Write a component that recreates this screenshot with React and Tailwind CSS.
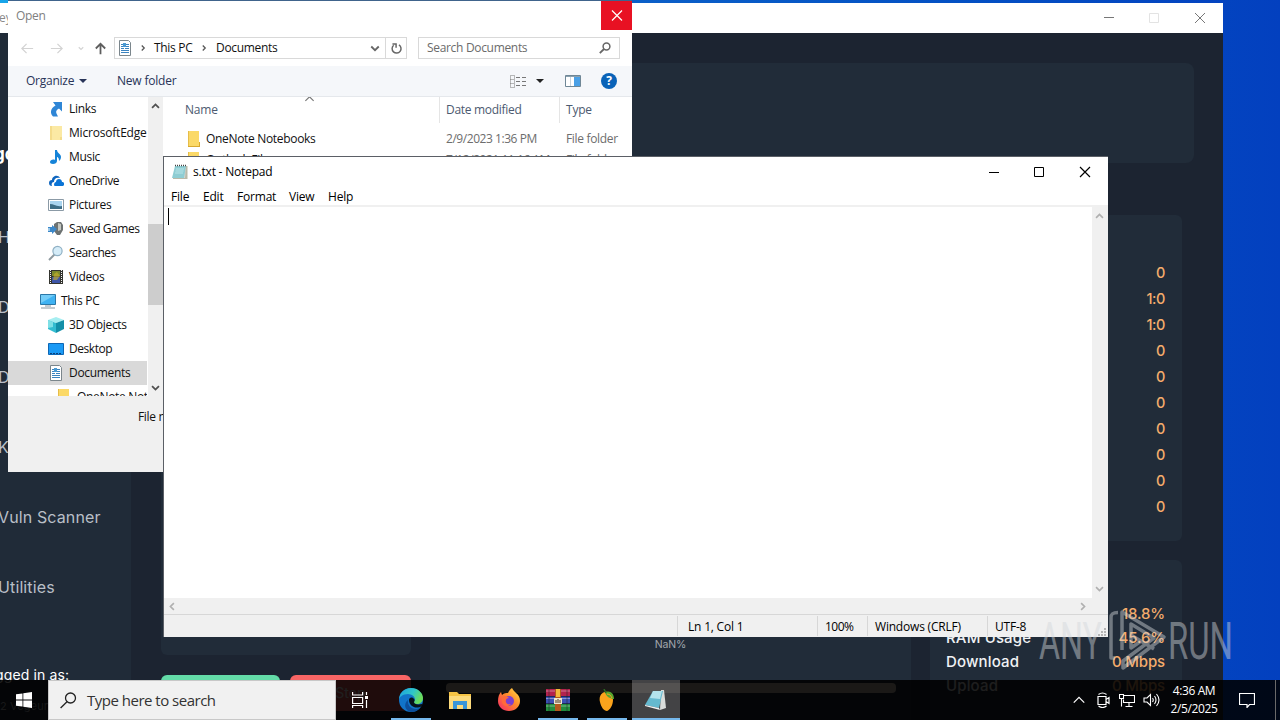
import clsx from 'clsx';

const ui = "font-['Open_Sans','Noto_Sans',sans-serif]";
const poppins = "font-['Inter','Open_Sans',sans-serif]";

const navItems = ['Home', 'Dashboard', 'Dorks', 'Keygen', 'Vuln Scanner', 'Utilities'];
const stats = ['0', '1:0', '1:0', '0', '0', '0', '0', '0', '0', '0'];
const usage = [
  ['CPU Usage', '18.8%'],
  ['RAM Usage', '45.6%'],
  ['Download', '0 Mbps'],
  ['Upload', '0 Mbps'],
];

const tree = [
  { label: 'Links', icon: 'links' },
  { label: 'MicrosoftEdge', icon: 'paleFolder', text: 'tracking-[-0.2px]' },
  { label: 'Music', icon: 'music' },
  { label: 'OneDrive', icon: 'onedrive' },
  { label: 'Pictures', icon: 'pictures' },
  { label: 'Saved Games', icon: 'games', text: 'tracking-[-0.45px]' },
  { label: 'Searches', icon: 'searches', text: 'tracking-[-0.45px]' },
  { label: 'Videos', icon: 'videos' },
  { label: 'This PC', icon: 'pc', pad: 'pl-8' },
  { label: '3D Objects', icon: 'cube' },
  { label: 'Desktop', icon: 'desktop', text: 'tracking-[-0.45px]' },
  { label: 'Documents', icon: 'doc', selected: true },
  { label: 'OneNote Notebooks', icon: 'folder', pad: 'pl-12' },
];

const files = [
  { name: 'OneNote Notebooks', date: '2/9/2023 1:36 PM' },
  { name: 'Outlook Files', date: '7/12/2021 11:16 AM' },
];

const icons = {
  links: (
    <path d="M5 1h9v9.500l-3-3c-2.500 1-3.500 3-2.500 5l1.500 3H5c-3-3-3-8 2.500-11z" fill="#2f86d6" />
  ),
  paleFolder: (
    <>
      <path d="M2 1h12v14H2z" fill="#fbe9a4" />
      <path d="M2 1h2v14H2zM12 12h2v3h-2z" fill="#f4dc8c" />
    </>
  ),
  folder: (
    <>
      <path d="M2 0h11v11h1v5H2z" fill="#fbd967" />
      <path d="M2 15h12v1H2zM13 11h1v4h-1z" fill="#d8a92f" />
      <path d="M2 0h1v15H2z" fill="#e6bd4a" />
    </>
  ),
  music: (
    <path d="M7 1h2c0 3 4 4 4 7 0 2-1 3-2 4 0-3-1-4-2-4v4c0 2-2 3-4 3s-3-1-3-2c0-2 3-3 5-2z" fill="#1583d8" />
  ),
  onedrive: (
    <>
      <path d="M1 10c0-2 1-3 3-3 0-4 6-6 8-2-4-1-6 1-6 4-2 0-3 2-2 4-2 0-3-1-3-3z" fill="#0f66bf" />
      <path d="M6 12c0-2 1-3 2-3 0-4 6-4 6 0 3 0 3 4 0 4H7c-1 0-1-1-1-1z" fill="#0a74d6" />
    </>
  ),
  pictures: (
    <>
      <path d="M.5 2.500h15v11H.5z" fill="#fff" stroke="#8b9aa6" />
      <path d="M2 4h12v8H2z" fill="#a9d4ef" />
      <path d="M2 7c4 0 6 3 12 2v3H2z" fill="#3d6d86" />
    </>
  ),
  games: (
    <>
      <path d="M6 3l3-2h4l2 3v5l-3 5H9l-3-4z" fill="#6d7272" />
      <path d="M10 2l3 1v6l-3 1z" fill="#c3c6c0" />
      <path d="M0 6h4V4l5 4-5 5v-2H0z" fill="#3b87c8" />
      <path d="M0 7h2v3H0z" fill="#9cc9ea" />
    </>
  ),
  searches: (
    <>
      <path d="M7 9l-6 6" stroke="#8f9aa0" strokeWidth="2" />
      <circle cx="9.500" cy="6" r="4.600" fill="#d5ecf8" stroke="#8fb0c4" strokeWidth="1.200" />
    </>
  ),
  videos: (
    <>
      <path d="M1 1h14v14H1z" fill="#34352f" />
      <path d="M4 2h8v5H4z" fill="#7c8a2c" />
      <path d="M4 8h8v6H4z" fill="#3d55a8" />
      <path d="M6 5l3-2 3 4-3 4H5z" fill="#cfb42a" opacity=".6" />
      <path d="M2.500 1v14M13.500 1v14" stroke="#f2f2f2" strokeDasharray="1 1" />
    </>
  ),
  pc: (
    <>
      <path d="M.5 1.500h15v10H.5z" fill="#3fb2f2" stroke="#2b78a8" />
      <path d="M1 2h14L1 10z" fill="#74cdf8" />
      <path d="M5 13h6M1 15h14" stroke="#8a98a2" />
    </>
  ),
  cube: (
    <>
      <path d="M8 0l8 3-8 3-8-3z" fill="#a6eef1" />
      <path d="M0 3l8 3v10l-8-4z" fill="#33bcd0" />
      <path d="M16 3L8 6v10l8-4z" fill="#138fa8" />
      <path d="M0 3l5 2v5l-5 1z" fill="#7fe0e6" />
    </>
  ),
  desktop: (
    <>
      <path d="M.5 2.500h15v11H.5z" fill="#1a9af5" stroke="#0d67b5" />
      <path d="M2 12.500h12" stroke="#0b3f78" strokeDasharray="2 1" />
    </>
  ),
  doc: (
    <>
      <path d="M2.500.5h9l2 2v13h-11z" fill="#fff" stroke="#7b868c" />
      <path d="M4 4.500h4M9 4.500h3M4 6.500h8M4 8.500h3M8 8.500h4M4 10.500h8M4 12.500h8" stroke="#3a83bf" />
      <path d="M6 3h3v4H6z" fill="#4c9bd3" />
    </>
  ),
};

function Icon({ name, className = 'size-4' }) {
  return (
    <svg viewBox="0 0 16 16" fill="none" className={clsx('shrink-0', className)}>
      {icons[name]}
    </svg>
  );
}

function Stroke({ d, className, width = 1, box = '0 0 16 16' }) {
  return (
    <svg viewBox={box} fill="none" stroke="currentColor" strokeWidth={width} className={clsx('shrink-0', className)}>
      <path d={d} />
    </svg>
  );
}

function ToolWindow() {
  return (
    <div className={clsx('absolute left-0 top-[3px] w-[1223px] h-[717px] flex flex-col bg-[#1c2431] overflow-hidden', poppins)}>
      <div className={clsx('h-[30px] shrink-0 bg-white flex items-center justify-between text-xs text-[#8a8a8a]', ui)}>
        <span className="-ml-px">ey</span>
        <div className="flex items-center">
          <Stroke d="M3 7.500h10" className="size-4 mr-[29px] text-[#777]" />
          <Stroke d="M3.500 3.500h9v9h-9z" className="size-4 mr-[30px] text-[#e3e3e3]" />
          <Stroke d="M3 3l10 10M13 3L3 13" className="size-4 mr-[15px] text-[#777]" />
        </div>
      </div>
      <div className="flex flex-1 min-h-0">
        <aside className="w-[131px] shrink-0 bg-[#202b38] flex flex-col text-[#b9bfc7] text-base tracking-[0.12px] whitespace-nowrap">
          <div className="h-[169px] shrink-0 pt-[109px] text-[17px] font-bold text-white leading-6">
            <span className="-ml-[6px]">go</span>
          </div>
          {navItems.map((item) => (
            <div key={item} className="h-[70px] shrink-0 flex items-center">
              <span className="-ml-[2px]">{item}</span>
            </div>
          ))}
          <div className="mt-[43px] text-[14px] leading-5 text-white">
            <span className="-ml-[5px]">gged in as:</span>
          </div>
          <div className="mt-[13px] text-[11px] leading-4">
            <span>2 Vegeuni</span>
          </div>
        </aside>
        <main className="flex-1 p-[30px] flex flex-col">
          <div className="h-[100px] w-[1033px] shrink-0 rounded-lg bg-[#212c39]" />
          <div className="mt-[52px] flex items-start gap-[19px]">
            <div className="w-[250px]">
              <div className="h-[440px] rounded-md bg-[#212c39]" />
              <div className="mt-5 flex gap-[10px] text-sm text-white">
                <div className="w-[119px] h-9 rounded-md bg-[#63dba8] flex items-center justify-center">Start</div>
                <div className="flex-1 h-9 rounded-md bg-[#f86565] flex items-center justify-center">Stop</div>
              </div>
            </div>
            <div className="w-[481px] h-[510px] rounded-md bg-[#212c39] flex flex-col items-center pt-[422px]">
              <span className="text-[10.500px] leading-4 tracking-[-0.1px] text-[#a3a8ae]">NaN%</span>
              <div className="mt-[30px] w-[450px] h-[10px] rounded bg-[#d8cdbd]" />
            </div>
            <div className="w-[252px] flex flex-col gap-[19px]">
              <div className="h-[326px] rounded-md bg-[#212c39] pt-[45px] pr-[17px] text-right text-[14.500px] leading-[26px] tracking-[-0.4px] font-medium text-[#f5ac6c]">
                {stats.map((s, i) => (
                  <div key={i}>{s}</div>
                ))}
              </div>
              <div className="h-[170px] rounded-md bg-[#212c39] pt-[42px] pl-4 pr-[17px] text-[15px] leading-6">
                {usage.map(([label, value]) => (
                  <div key={label} className="flex justify-between">
                    <span className="font-medium tracking-[0.15px] text-[#f0f2f4]">{label}</span>
                    <span className="tracking-[-0.15px] font-medium text-[#f5ac6c]">{value}</span>
                  </div>
                ))}
              </div>
            </div>
          </div>
        </main>
      </div>
    </div>
  );
}

function AddressBar() {
  return (
    <div className="h-9 shrink-0 flex items-center pl-3 pr-3">
      <Stroke d="M14 8H2M7 3L2 8l5 5" className="size-[15px] text-[#d3d3d3]" width={1.3} />
      <Stroke d="M2 8h12M9 3l5 5-5 5" className="size-[15px] ml-[14px] text-[#d3d3d3]" width={1.3} />
      <Stroke d="M5 7l3 3 3-3" className="size-3 ml-[11px] text-[#d3d3d3]" width={1.5} />
      <Stroke d="M8 14V3M3 8l5-5 5 5" className="size-[15px] ml-[6px] text-[#5e5e5e]" width={1.9} />
      <div className="ml-[6px] h-[22px] w-[293px] border border-[#d9d9d9] flex items-center">
        <Icon name="doc" className="size-4 ml-[2px]" />
        <Stroke d="M6 4l4 4-4 4" className="size-[10px] ml-[5px] text-[#555]" width={2} />
        <span className="ml-[6px] w-10">This PC</span>
        <Stroke d="M6 4l4 4-4 4" className="size-[10px] ml-[5px] text-[#555]" width={2} />
        <span className="ml-[7px]">Documents</span>
        <Stroke d="M3 6l5 5 5-5" className="size-3 ml-auto mr-1 text-[#666]" width={2.4} />
        <div className="w-[21px] h-full border-l border-[#d9d9d9] flex items-center justify-center">
          <Stroke d="M11 3.500a5.500 5.500 0 1 1-6.500.5M3 2.500h4.500V7" className="size-[13px] text-[#666]" width={1.8} />
        </div>
      </div>
      <div className="ml-[11px] h-[22px] flex-1 border border-[#d9d9d9] flex items-center justify-between pl-2 pr-2 text-[#6b6b6b]">
        <span>Search Documents</span>
        <svg viewBox="0 0 12 12" fill="none" stroke="#666" className="size-3">
          <circle cx="7.500" cy="4.500" r="3.400" strokeWidth="1.500" />
          <path d="M5 7L.8 11.200" strokeWidth="1.800" />
        </svg>
      </div>
    </div>
  );
}

function CommandBar() {
  return (
    <div className="h-[31px] shrink-0 bg-[#f5f7fa] border-b border-[#e5e8ec] flex items-center pl-[18px] pr-[15px] text-[#283458]">
      <span className="w-[49px] tracking-[-0.25px]">Organize</span>
      <svg viewBox="0 0 8 4" className="w-2 h-1 ml-[4px]" fill="#283458"><path d="M0 0h8L4 4z" /></svg>
      <span className="ml-[30px] tracking-[-0.2px]">New folder</span>
      <svg viewBox="0 0 17 13" className="w-[17px] h-[13px] ml-auto" stroke="#777" fill="none">
        <path d="M.5.5h4v12h-4zM.5 4.500h4M.5 8.500h4" strokeDasharray="1 1" />
        <path d="M6 2.500h4M12 2.500h4M6 6.500h4M12 6.500h4M6 10.500h4M12 10.500h4" />
      </svg>
      <svg viewBox="0 0 8 4" className="w-2 h-1 ml-[9px]" fill="#222"><path d="M0 0h8L4 4z" /></svg>
      <svg viewBox="0 0 16 12" className="w-4 h-3 ml-[21px]">
        <path d="M.5.5h15v11H.5z" fill="#fff" stroke="#6f8796" />
        <path d="M9 1h6v10H9z" fill="#4aa0e6" />
        <path d="M5.500 1v10" stroke="#c9d4dc" />
        <path d="M1 1.500h14" stroke="#8aa0ae" />
      </svg>
      <div className="ml-5 size-4 rounded-full bg-[#0a63b8] text-white text-xs leading-4 font-bold text-center">?</div>
    </div>
  );
}

function OpenDialog() {
  return (
    <div className={clsx('absolute left-2 top-0 w-[624px] h-[472px] bg-white border-t border-[#40648c] flex flex-col text-xs text-[#111] tracking-[-0.32px] whitespace-nowrap', ui)}>
      <div className="h-[29px] shrink-0 flex justify-between items-center pl-2 text-[#808080]">
        <span>Open</span>
        <div className="w-[31px] h-[29px] bg-[#e81123] flex items-center justify-center text-white">
          <Stroke d="M3 2.500l10 10M13 2.500L3 12.500" className="size-4" width={1.2} />
        </div>
      </div>
      <AddressBar />
      <CommandBar />
      <div className="h-[299px] shrink-0 flex">
        <div className="w-[139px] overflow-hidden">
          {tree.map((t) => (
            <div
              key={t.label}
              className={clsx('h-6 flex items-center gap-[5px]', t.pad || 'pl-10', t.selected && 'bg-[#d9d9d9]')}
            >
              <Icon name={t.icon} />
              <span className={t.text}>{t.label}</span>
            </div>
          ))}
        </div>
        <div className="ml-px w-[15px] bg-[#f0f0f0] flex flex-col items-center">
          <Stroke d="M3 10l5-5 5 5" className="size-[11px] mt-1 text-[#505050]" width={2.6} />
          <div className="mt-[112px] h-[81px] w-full bg-[#cdcdcd]" />
          <Stroke d="M3 6l5 5 5-5" className="size-[11px] mt-auto mb-[3px] text-[#505050]" width={2.6} />
        </div>
        <div className="flex-1 overflow-hidden pl-px">
          <div className="relative h-[26px] flex items-center text-[#4c5a70] tracking-[-0.2px]">
            <Stroke d="M2 10l6-6 6 6" className="absolute left-[140px] top-[-3px] size-[11px] text-[#777]" width={1.6} />
            <span className="w-[275px] pl-[21px]">Name</span>
            <span className="w-[120px] h-full border-l border-[#e5e5e5] pl-[6px] leading-[26px] tracking-[-0.3px]">Date modified</span>
            <span className="h-full border-l border-[#e5e5e5] pl-[6px] leading-[26px]">Type</span>
          </div>
          <div className="pt-[5px]">
            {files.map((f) => (
              <div key={f.name} className="h-[21px] flex items-center">
                <Icon name="folder" className="size-4 ml-[22px]" />
                <span className="ml-1 w-[240px]">{f.name}</span>
                <span className="w-[120px] text-[#6d6d6d] tracking-[-0.45px]">{f.date}</span>
                <span className="text-[#6d6d6d]">File folder</span>
              </div>
            ))}
          </div>
        </div>
      </div>
      <div className="flex-1 bg-[#f0f0f0] pl-[130px] pt-[13px]">File name:</div>
    </div>
  );
}

function Notepad() {
  return (
    <div className={clsx('absolute left-[163px] top-[156px] w-[945px] h-[481px] bg-white border-l border-t border-[#5b5f66] flex flex-col text-xs text-black tracking-[-0.2px] whitespace-nowrap', ui)}>
      <div className="h-[29px] shrink-0 flex items-center pl-2">
        <svg viewBox="0 0 16 16" className="size-4">
          <path d="M4 2h11l-2 13H1z" fill="#d3d6d2" />
          <path d="M3 2h11l-2 12H0z" fill="#8ecdd3" />
          <path d="M14 2h1.500v13H1v-1h12z" fill="#b9b9a8" />
          <path d="M4 5h8M3.500 7h8M3 9h8" stroke="#b9e4e8" />
          <path d="M3 1.500h11" stroke="#444" strokeWidth="1.500" strokeDasharray="1 1" />
        </svg>
        <span className="ml-[5px] pt-px">s.txt - Notepad</span>
        <div className="ml-auto flex pr-[15px]">
          <Stroke d="M3 8.500h10" className="size-4 mr-[29px]" />
          <Stroke d="M3.500 3.500h9v9h-9z" className="size-4 mr-[30px]" />
          <Stroke d="M3 3l10 10M13 3L3 13" className="size-4" width={1.2} />
        </div>
      </div>
      <div className="h-[21px] shrink-0 flex items-center pl-[7px] pt-[2px] border-b-2 border-[#f0f0f0]">
        <span className="w-8">File</span>
        <span className="w-[34px]">Edit</span>
        <span className="w-[52px]">Format</span>
        <span className="w-[39px]">View</span>
        <span>Help</span>
      </div>
      <div className="flex h-[391px] shrink-0">
        <div className="flex-1 pl-1 pt-[1px]">
          <div className="w-px h-[17px] bg-black" />
        </div>
        <div className="w-4 bg-[#f0f0f0] flex flex-col items-center justify-between py-1 pr-px text-[#b0b0b0]">
          <Stroke d="M3 10l5-5 5 5" className="size-[11px]" width={2.4} />
          <Stroke d="M3 6l5 5 5-5" className="size-[11px]" width={2.4} />
        </div>
      </div>
      <div className="h-4 shrink-0 bg-[#f0f0f0] flex items-center justify-between pl-[3px] pr-5 text-[#b0b0b0]">
        <Stroke d="M10 3L5 8l5 5" className="size-[11px]" width={2.4} />
        <Stroke d="M6 3l5 5-5 5" className="size-[11px]" width={2.4} />
      </div>
      <div className="flex-1 bg-[#f0f0f0] border-t border-[#d7d7d7] flex items-center">
        <div className="ml-[513px] w-[140px] h-5 border-l border-[#d7d7d7] pl-[10px] leading-[21px]">Ln 1, Col 1</div>
        <div className="w-[50px] h-5 border-l border-[#d7d7d7] pl-[7px] leading-[21px] tracking-[-0.5px]">100%</div>
        <div className="w-[120px] h-5 border-l border-[#d7d7d7] pl-[7px] leading-[21px]">Windows (CRLF)</div>
        <div className="h-5 border-l border-[#d7d7d7] pl-[7px] leading-[21px]">UTF-8</div>
        <svg viewBox="0 0 10 10" className="size-[10px] ml-auto mt-auto mr-px" fill="#b5b5b5">
          <path d="M7 1h2v2H7zM4 4h2v2H4zM7 4h2v2H7zM1 7h2v2H1zM4 7h2v2H4zM7 7h2v2H7z" />
        </svg>
      </div>
    </div>
  );
}

function Watermark() {
  return (
    <svg
      viewBox="0 0 200 70"
      className="absolute left-[1035px] top-[605px] w-[200px] h-[70px] opacity-45 font-['Roboto',sans-serif]"
      fill="#d3d6da"
    >
      <g transform="translate(4 54) scale(1 1.450)" fontSize="36">
        <text textLength="63" lengthAdjust="spacingAndGlyphs">ANY</text>
      </g>
      <g transform="translate(133 54) scale(1 1.450)" fontSize="36">
        <text textLength="65" lengthAdjust="spacingAndGlyphs">RUN</text>
      </g>
      <g fill="none" stroke="#d3d6da" strokeWidth="3.500" strokeLinejoin="round">
        <path d="M83 7.500c-5 0-7 1-7 5V53h4" />
        <path d="M87 45V7l42 25-41 31v-7l31-23-23-14v24l10-7" />
        <path d="M96 30l23 14" />
      </g>
    </svg>
  );
}

function TaskButton({ children, running, active }) {
  return (
    <div className={clsx('w-12 h-10 relative flex items-center justify-center', active && 'bg-white/25')}>
      {children}
      {running && (
        <div className={clsx('absolute bottom-0 h-[2px] bg-[#76b9ed]', active ? 'inset-x-0' : 'inset-x-1')} />
      )}
    </div>
  );
}

function Taskbar() {
  return (
    <div className={clsx('absolute left-0 bottom-0 w-full h-10 bg-black/88 flex items-center text-white', ui)}>
      <div className="w-12 flex justify-center">
        <svg viewBox="0 0 16 16" className="size-4" fill="#fff">
          <path d="M0 2.300L6.500 1.400v6.200H0zM7.300 1.300L16 0v7.600H7.300zM0 8.400h6.500v6.200L0 13.700zM7.300 8.400H16V16l-8.700-1.300z" />
        </svg>
      </div>
      <div className="w-72 h-10 bg-[#f1f1f1] border border-[#c8c8c8] flex items-center pl-[11px] text-[#333]">
        <svg viewBox="0 0 17 17" className="size-[17px]" fill="none" stroke="#222" strokeWidth="1.300">
          <circle cx="10.500" cy="6" r="5" />
          <path d="M7 9.800L.6 16" />
        </svg>
        <span className="ml-[10px] text-[15px] tracking-[-0.5px]">Type here to search</span>
      </div>
      <div className="w-[51px] pl-4">
        <svg viewBox="0 0 16 16" className="size-4" fill="none" stroke="#fff" strokeWidth="1.200">
          <path d="M.6 0v3h10V0M.6 5.500h10v6H.6zM.6 16v-2.500h10V16M14.500 0v3M14.500 8v8" />
          <path d="M13 4h3v3h-3z" fill="#fff" stroke="none" />
        </svg>
      </div>
      <div className="flex gap-px">
        <TaskButton running>
          <svg viewBox="0 0 24 24" className="size-6">
            <defs>
              <linearGradient id="edgeTop" x1="0" y1="0" x2="1" y2=".4">
                <stop offset="0" stopColor="#1c9fe0" />
                <stop offset=".6" stopColor="#2fc6c9" />
                <stop offset="1" stopColor="#6bdc5a" />
              </linearGradient>
            </defs>
            <circle cx="12" cy="12" r="12" fill="#1174c9" />
            <path d="M0 12C0 5 5 0 12 0s12 5 12 10c0 4-3 6-6 6-3 0-4-1-4-2s2-1 2-3c0-2-3-5-7-5-5 0-9 3-9 6z" fill="url(#edgeTop)" />
            <path d="M9 12c-1 5 3 9 8 9 2 0 4-1 5-2-2 3-6 5-10 5-6-1-8-8-3-12z" fill="#0c4f9c" />
            <path d="M10 12c0-2 2-3 4-2s2 3 1 4c0 2 3 3 8 2v2c-6 4-13 0-13-6z" fill="#07121c" />
          </svg>
        </TaskButton>
        <TaskButton>
          <svg viewBox="0 0 22 19" className="w-[22px] h-[19px]">
            <path d="M0 1h8l2 2h12v15H0z" fill="#f6c445" />
            <path d="M0 5h22v13H0z" fill="#fddb7c" />
            <path d="M4 10h14v8h-4v-4H8v4H4z" fill="#3a96d8" />
          </svg>
        </TaskButton>
        <TaskButton>
          <svg viewBox="0 0 24 24" className="size-6">
            <defs>
              <linearGradient id="fox" x1="1" y1="0" x2="0" y2="1">
                <stop offset="0" stopColor="#ffe14a" />
                <stop offset=".45" stopColor="#ff8a2a" />
                <stop offset="1" stopColor="#f5246c" />
              </linearGradient>
            </defs>
            <path d="M15 0c1 2 3 4 4 5 3 2 4 5 4 8 0 6-5 10-11 10S1 19 1 13c0-4 1-7 3-9l1 3c2-2 4-2 6-2 1-2 2-4 4-5z" fill="url(#fox)" />
            <circle cx="12" cy="13" r="5" fill="#7b3fd0" />
            <path d="M5 9c3-2 5-1 7 1-2 0-3 1-3 2-1 3 2 5 5 4-3 4-9 2-9-3z" fill="#ff6a3a" />
          </svg>
        </TaskButton>
        <TaskButton running>
          <svg viewBox="0 0 24 22" className="w-6 h-[22px]">
            <path d="M0 0h24v7H0z" fill="#b3234e" />
            <path d="M0 7.500h24v7H0z" fill="#3b50b4" />
            <path d="M0 15h24v7H0z" fill="#218c3d" />
            <path d="M0 2h24M0 9.500h24M0 17h24" stroke="#fff" strokeOpacity=".4" />
            <path d="M3 0v22M21 0v22" stroke="#222" strokeOpacity=".5" />
            <path d="M9 0h6v22H9z" fill="#b2591d" />
            <path d="M10 0h4v8h-4z" fill="#f2b93d" />
            <path d="M8 9h8v6H8z" fill="#eee5cd" />
            <path d="M10 11v3M12 10v4M14 11v3" stroke="#4a3820" />
          </svg>
        </TaskButton>
        <TaskButton running>
          <svg viewBox="0 0 16 22" className="w-4 h-[22px]">
            <path d="M6 3C1 4 0 9 1 13c1 5 4 9 7 9 3-1 6-6 6-11 0-5-3-9-8-8z" fill="#fba31c" />
            <path d="M6 3c5-2 9 1 9 7-3 0-8-2-9-7z" fill="#55a630" />
            <path d="M8 5c3 0 4 2 5 4" stroke="#fba31c" fill="none" />
            <path d="M5 0l2 4" stroke="#2d6b25" strokeWidth="1.500" />
          </svg>
        </TaskButton>
        <TaskButton running active>
          <svg viewBox="0 0 22 22" className="size-[22px]">
            <path d="M16 1h3l2 18-6 2z" fill="#d9dcda" />
            <path d="M8 2h10l-4 17L0 16z" fill="#65b9cf" />
            <path d="M8 2h9l-2 8-10-1z" fill="#b4e2eb" />
            <path d="M0 16l14 3 1 2-15-4z" fill="#f2f2f2" />
          </svg>
        </TaskButton>
      </div>
      <div className="ml-auto flex items-center">
        <Stroke d="M2 11l6-6 6 6" className="size-[14px] mr-[9px]" width={1.4} />
        <Stroke d="M3.500 2.500q4-3 8 0M3.500 14q4 3 8 0M3 4.500h8v8H3zM11 7.500l3-2v6l-3-2" className="size-4 mr-2" width={1.2} />
        <Stroke d="M5 3.500h10.500v7H4.500v-3M10 10.500v4M6.500 14.500h7M.5 2.500h4v4h-4zM2.500 6.500v8" className="size-4 mr-2" width={1.1} />
        <Stroke d="M.5 6h3L7 2.500v11L3.500 10h-3zM9 6q1.500 2 0 4M11 4q3 4 0 8M13 2q5 6 0 12" className="w-[17px] h-4 mr-[10px]" width={1.1} />
        <div className="w-[48px] text-xs leading-[18px] tracking-[-0.4px] whitespace-nowrap flex flex-col items-center">
          <span>4:36 AM</span>
          <span>2/5/2025</span>
        </div>
        <Stroke d="M.5 1.500h15v11h-5l-2.500 3v-3H.5z" className="size-4 ml-[21px] mr-5" width={1.2} />
        <div className="w-[5px] h-10 border-l border-[#6a6a6a]" />
      </div>
    </div>
  );
}

export default function App() {
  return (
    <div className="relative w-[1280px] h-[720px] overflow-hidden bg-linear-to-r from-[#18a5ea] via-[#0b5fc8] to-[#0340bf]">
      <ToolWindow />
      <OpenDialog />
      <Notepad />
      <Taskbar />
      <Watermark />
    </div>
  );
}
